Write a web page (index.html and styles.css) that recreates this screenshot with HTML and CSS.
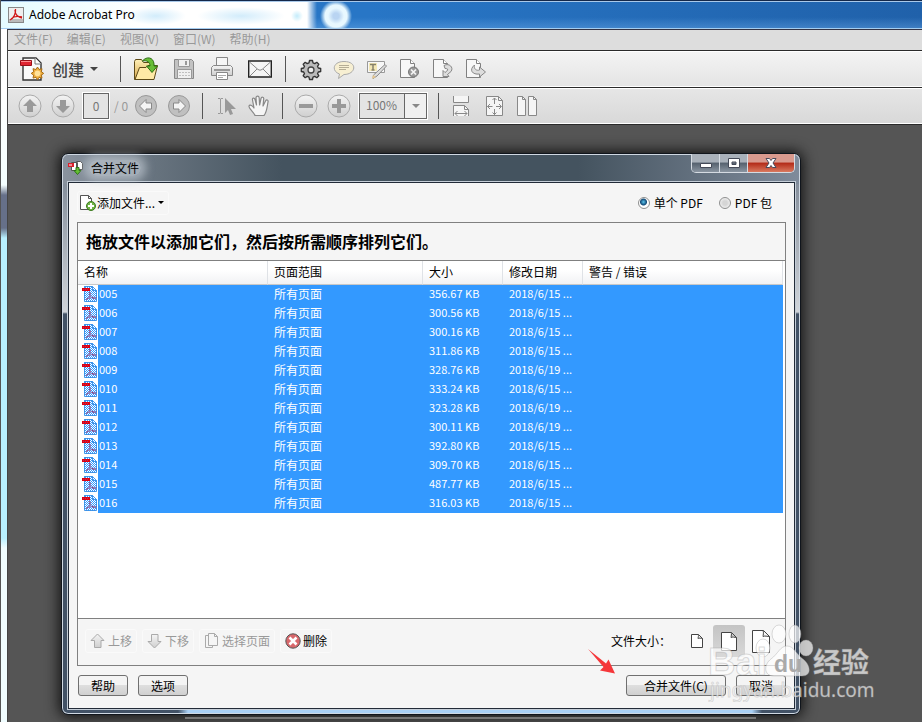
FILE: index.html
```html
<!DOCTYPE html>
<html lang="zh-CN">
<head>
<meta charset="UTF-8">
<meta name="viewport" content="width=device-width, initial-scale=1">
<title>Adobe Acrobat Pro</title>
<link rel="stylesheet" href="styles.css">
</head>
<body>
<svg class="defs" aria-hidden="true">
  <defs>
    <pattern id="checker" width="2" height="2" patternUnits="userSpaceOnUse">
      <path fill="#3399ff" d="M0 0h1v1h-1zM1 1h1v1h-1z"/>
    </pattern>
    <linearGradient id="silver" x1="0" y1="0" x2="0" y2="1">
      <stop offset="0" stop-color="#f4f4f4"/><stop offset="1" stop-color="#cfcfcf"/>
    </linearGradient>
    <linearGradient id="gold" x1="0" y1="0" x2="0" y2="1">
      <stop offset="0" stop-color="#fff0b8"/><stop offset="1" stop-color="#d9a94c"/>
    </linearGradient>
    <symbol id="pdf-file" viewBox="0 0 16 16">
      <path fill="#fff" stroke="#4c8fd0" d="M2.5.5h8l4 4v11h-12z"/>
      <path fill="none" stroke="#4c8fd0" d="M10.5.5v4h4"/>
      <path fill="none" stroke="#d8203c" d="M4 14c3-1 5-6 4-8s-1 3 1 5 4 2 5 1-4-1-9 1"/>
      <path fill="url(#checker)" d="M2 0h9l4 4v12H2z"/>
      <path fill="#e00010" d="M0 2h8v3H0z"/>
      <path fill="#b03060" d="M1 3h1v1h-1zM3 3h1v1h-1zM5 3h1v1h-1z"/>
    </symbol>
    <symbol id="page" viewBox="0 0 20 20">
      <path fill="#f7f7f7" stroke="#808080" d="M.5.5h10l4 4v14H.5z"/>
      <path fill="#fff" stroke="#808080" d="M10.5.5v4h4"/>
    </symbol>
  </defs>
</svg>

<header class="titlebar">
  <svg width="16" height="16" viewBox="0 0 16 16">
    <rect x=".5" y=".5" width="15" height="15" fill="#eee" stroke="#888"/>
    <path fill="#888" d="M1 12h14v3H1z" opacity=".5"/>
    <path fill="none" stroke="#d01818" stroke-width="1.3" d="M2 13c4-2 6-7 5.500-11M7 3c0 4 3 7 7 8M3 12c3-3 7-3 11-2"/>
  </svg>
  <h1>Adobe Acrobat Pro</h1>
</header>

<div class="window">
  <nav class="menubar">
    <button>文件(F)</button>
    <button>编辑(E)</button>
    <button>视图(V)</button>
    <button>窗口(W)</button>
    <button>帮助(H)</button>
  </nav>

  <div class="toolbar main-tools">
    <button class="create">
      <svg width="24" height="24" viewBox="0 0 24 24">
        <path fill="#fafafa" stroke="#333" stroke-width="1.4" d="M3 1h13l5 5v17H3z"/>
        <path fill="#fff" stroke="#777" d="M15 1v6h6"/>
        <path fill="#e02532" stroke="#9a1018" d="M.5 3.500h11v5H.5z"/>
        <path fill="#ff8c90" d="M1 4h10v1H1z"/>
        <path fill="#f0b040" stroke="#a86c14" d="M17.500 10l1.500 2.500 3-.8-.7 3 2.400 1.700-2.400 1.700.7 3-3-.8-1.500 2.500-1.500-2.500-3 .8.7-3-2.500-1.700 2.500-1.700-.7-3 3 .8z"/>
        <circle cx="17.500" cy="16.400" r="2.800" fill="#ffe29a"/>
      </svg>
      <span>创建</span>
      <i class="caret"></i>
    </button>
    <i class="sep"></i>
    <div class="group wide">
      <button aria-label="打开">
        <svg width="24" height="24" viewBox="0 0 24 24">
          <path fill="url(#gold)" stroke="#5e4a18" d="M.5 22.500v-18l1-2h6l2 3h9v17z"/>
          <path fill="#ffe9a6" stroke="#5e4a18" d="M1 22.500L5.500 10.500H12l2-2h9.500L20 22.500z"/>
          <path fill="#67bd35" stroke="#2c6e12" d="M8.500 4c4-5 11-4 11.500 3v2h3.500L18 15.500 12.500 9H16c0-4-3-6-7.500-5z"/>
        </svg>
      </button>
      <button aria-label="保存" disabled>
        <svg width="24" height="24" viewBox="0 0 24 24">
          <path fill="#c2c2c2" stroke="#888" d="M2.500 2.500h17l2 2v17h-19z"/>
          <path fill="#f0f0f0" stroke="#999" d="M6.500 2.500h11v7h-11zM5.500 12.500h14v9h-14z"/>
          <path fill="#999" d="M13 4h2v4h-2z"/>
          <path stroke="#c0c0c0" stroke-dasharray="2 1" d="M7 15.500h11M7 18.500h11"/>
        </svg>
      </button>
      <button aria-label="打印" disabled>
        <svg width="24" height="24" viewBox="0 0 24 24">
          <path fill="#f6f6f6" stroke="#888" d="M6.500.5h11v9h-11z"/>
          <path fill="url(#silver)" stroke="#888" d="M3.500 8.500h17l2 2v8h-21v-8z"/>
          <path fill="#999" d="M4 12h16v2H4z"/>
          <path fill="#fff" stroke="#888" d="M6.500 15.500h11v7h-11z"/>
          <path stroke="#aaa" d="M8 18.500h8M8 20.500h5"/>
        </svg>
      </button>
      <button aria-label="电子邮件">
        <svg width="24" height="24" viewBox="0 0 24 24">
          <path fill="#f5f5f5" stroke="#222" stroke-width="1.400" d="M.7 4h22.600v16H.7z"/>
          <path fill="none" stroke="#888" d="M1.500 5L10 12.500q2 1.500 4 0L22.500 5M2 19l7-7M22 19l-7-7"/>
        </svg>
      </button>
    </div>
    <i class="sep"></i>
    <div class="group">
      <button aria-label="设置">
        <svg width="24" height="24" viewBox="0 0 24 24">
          <path fill="#bbb" stroke="#333" stroke-width="1.300" stroke-linejoin="round" d="M10.500 3.500h3l.5 2.300 1.800.8 2-1.300 2 2-1.300 2 .8 1.700 2.400.5v3l-2.400.5-.8 1.700 1.300 2-2 2-2-1.300-1.800.8-.5 2.300h-3l-.5-2.300-1.800-.8-2 1.300-2-2 1.300-2-.8-1.700-2.400-.5v-3l2.400-.5.8-1.700-1.300-2 2-2 2 1.300 1.800-.8z"/>
          <circle cx="12" cy="13" r="3" fill="#eee" stroke="#444" stroke-width="1.300"/>
        </svg>
      </button>
      <button aria-label="注释" disabled>
        <svg width="24" height="24" viewBox="0 0 24 24">
          <path fill="#f7efd2" stroke="#aaa" d="M12 4.500c14 0 12 13 0 13L6.500 21.500l1-4.500C-1 14 1 4.500 12 4.500z"/>
          <path stroke="#b5ad95" d="M7 8.500h10M7 10.500h10M7 12.500h7"/>
        </svg>
      </button>
      <button aria-label="编辑文本" disabled>
        <svg width="24" height="24" viewBox="0 0 24 24">
          <path fill="#f7f7f7" stroke="#999" d="M2.500 4.500h17v11h-17z"/>
          <path fill="#f3e7b5" d="M4 6h8v8H4z"/>
          <path stroke="#86816c" stroke-width="1.500" d="M5 7.500h6M8 7v6M6.500 13h3"/>
          <path fill="#ddd" stroke="#888" d="M20 7.500l1.500 1.500L12 19l-4 2.500.5-3.500z"/>
          <path fill="#e8c890" d="M8 18l3 2-4 2z"/>
        </svg>
      </button>
      <button aria-label="删除页面" disabled>
        <svg width="24" height="24" viewBox="0 0 24 24">
          <use href="#page" x="2" y="2" width="20" height="20"/>
          <circle cx="15.500" cy="15" r="5" fill="#999" stroke="#777"/>
          <path stroke="#f5f5f5" stroke-width="1.700" d="M13 12.500l5 5M18 12.500l-5 5"/>
        </svg>
      </button>
      <button aria-label="旋转页面" disabled>
        <svg width="24" height="24" viewBox="0 0 24 24">
          <use href="#page" x="2" y="2" width="20" height="20"/>
          <path fill="#ddd" stroke="#888" d="M13 8.500c5-3 10 2 7 6l-3.500 3 1.500 2h-6v-6l2 2c3-2 4-4 0-4z"/>
        </svg>
      </button>
      <button aria-label="提取页面" disabled>
        <svg width="24" height="24" viewBox="0 0 24 24">
          <use href="#page" x="2" y="2" width="20" height="20"/>
          <path fill="#ddd" stroke="#888" d="M10.500 8c-6 5-2 10 5 9v3l6-5-6-5v3c-3 1-6-1-5-5z"/>
        </svg>
      </button>
    </div>
  </div>

  <div class="toolbar nav-tools">
    <div class="group">
      <button aria-label="上一页" disabled>
        <svg width="24" height="24" viewBox="0 0 24 24">
          <circle cx="12" cy="12" r="11" fill="url(#silver)" stroke="#aaa"/>
          <path fill="#999" d="M12 5l7 7h-4v6H9v-6H5z"/>
        </svg>
      </button>
      <button aria-label="下一页" disabled>
        <svg width="24" height="24" viewBox="0 0 24 24">
          <circle cx="12" cy="12" r="11" fill="url(#silver)" stroke="#aaa"/>
          <path fill="#999" d="M12 19l7-7h-4V6H9v6H5z"/>
        </svg>
      </button>
    </div>
    <input class="page-no" type="text" value="0" aria-label="页码">
    <span class="page-total">/ 0</span>
    <div class="group">
      <button aria-label="后退" disabled>
        <svg width="24" height="24" viewBox="0 0 24 24">
          <circle cx="12" cy="12" r="10.500" fill="#c0c0c0" stroke="#999"/>
          <path fill="#f4f4f4" stroke="#888" d="M5.500 12L12 5.500v3.500h5.500v6H12v3.500z"/>
        </svg>
      </button>
      <button aria-label="前进" disabled>
        <svg width="24" height="24" viewBox="0 0 24 24">
          <circle cx="12" cy="12" r="10.500" fill="#c0c0c0" stroke="#999"/>
          <path fill="#f4f4f4" stroke="#888" d="M18.500 12L12 5.500v3.500H6.500v6H12v3.500z"/>
        </svg>
      </button>
    </div>
    <i class="sep"></i>
    <div class="group">
      <button aria-label="选择工具" disabled>
        <svg width="24" height="24" viewBox="0 0 24 24">
          <path fill="none" stroke="#999" d="M4 4.500h2l.5.500.5-.5h2M6.500 5v14M4 19.500h2l.5-.5.5.5h2"/>
          <path fill="#999" d="M11 4v15l3-3 2 5 3-1-2-5h5z"/>
        </svg>
      </button>
      <button aria-label="手形工具" disabled>
        <svg width="24" height="24" viewBox="0 0 24 24">
          <path fill="#f5f5f5" stroke="#888" stroke-width="1.200" stroke-linejoin="round" d="M8 21.500C7 18 1 14 2 12s4 0 5 2L5.500 6C5 3.500 7.500 3.500 8 5.500L9.500 11 9 4c0-2.500 3-2.500 3.200 0l.4 7L14 4.500c.5-2 3-1.500 2.700.5L16 12l2.500-5c1-2 3-1 2.500 1-1 5-1 10-4 13.500z"/>
        </svg>
      </button>
    </div>
    <i class="sep"></i>
    <div class="group">
      <button aria-label="缩小" disabled>
        <svg width="24" height="24" viewBox="0 0 24 24">
          <circle cx="12" cy="12" r="11" fill="url(#silver)" stroke="#aaa"/>
          <path fill="#999" d="M5 10h14v4H5z"/>
        </svg>
      </button>
      <button aria-label="放大" disabled>
        <svg width="24" height="24" viewBox="0 0 24 24">
          <circle cx="12" cy="12" r="11" fill="url(#silver)" stroke="#aaa"/>
          <path fill="#999" d="M10 5h4v5h5v4h-5v5h-4v-5H5v-4h5z"/>
        </svg>
      </button>
    </div>
    <div class="zoom">
      <select aria-label="缩放"><option>100%</option></select>
      <i class="caret"></i>
    </div>
    <i class="sep"></i>
    <div class="group">
      <button aria-label="适合宽度" disabled>
        <svg width="24" height="24" viewBox="0 0 24 24" fill="#f5f5f5" stroke="#888">
          <path d="M3.500 2v6.500h15V2M3.500 22V11.500h11l4 4V22"/>
          <path fill="none" d="M14.500 11.500v4h4M5 19.500h12M7.500 17l-2.500 2.500L7.500 22M14.500 17l2.500 2.500-2.500 2.500"/>
        </svg>
      </button>
      <button aria-label="适合页面" disabled>
        <svg width="24" height="24" viewBox="0 0 24 24" fill="#f5f5f5" stroke="#888">
          <path d="M3.500 2.500h12l4 4v15h-16z"/>
          <path fill="none" d="M15.500 2.500v4h4M4.500 12.500h5M13 12.500h5M11.500 4v6M11.500 15v6M7 10l-2.500 2.500L7 15M16 10l2.500 2.500L16 15M9.500 6l2-2 2 2M9.500 18.500l2 2 2-2"/>
        </svg>
      </button>
      <button aria-label="双页" disabled>
        <svg width="24" height="24" viewBox="0 0 24 24" fill="#f5f5f5" stroke="#888">
          <path d="M1.500 2.500h5l3 3v16h-8zM12.500 2.500h5l3 3v16h-8z"/>
          <path fill="none" d="M6.500 2.500v3h3M17.500 2.500v3h3"/>
        </svg>
      </button>
    </div>
  </div>

  <main class="workspace">
    <section class="dialog" aria-label="合并文件">
      <div class="dialog-title">
        <svg width="16" height="16" viewBox="0 0 16 16">
          <path fill="#fff" stroke="#555" d="M3.500 2.500h6v8h-6zM8.500 1.500h4l2 2v6h-6z"/>
          <path fill="#d9202c" d="M0 3h6v4H0z"/>
          <path fill="#fff" d="M1 4.500h3v1H1z"/>
          <path fill="#62c030" stroke="#2c7015" d="M8 7.500h3v3h2l-3.500 4-3.500-4H8z"/>
        </svg>
        <h2>合并文件</h2>
        <div class="win-buttons">
          <button aria-label="最小化"><svg width="14" height="12" viewBox="0 0 14 12"><path fill="#fff" stroke="#444a58" d="M1.500 6.500h11v4h-11z"/></svg></button>
          <button aria-label="最大化"><svg width="14" height="12" viewBox="0 0 14 12"><path fill="#fff" stroke="#444a58" fill-rule="evenodd" d="M1.500 1.500h11v9h-11zM5 5v2.500h4V5z"/></svg></button>
          <button class="close" aria-label="关闭"><svg width="14" height="12" viewBox="0 0 14 12"><path fill="#fff" stroke="#4a4a5a" d="M2 1.500h3.500L7 3.500l1.500-2H12L9 6l3 4.500H8.500L7 8.500l-1.500 2H2L5 6z"/></svg></button>
        </div>
      </div>

      <div class="dialog-body">
        <div class="add-row">
          <button class="flat add">
            <svg width="16" height="16" viewBox="0 0 16 16">
              <path fill="#fff" stroke="#555" d="M.5.500h8l3 3v11H.5z"/>
              <path fill="none" stroke="#555" d="M8.500.5v3h3"/>
              <circle cx="11" cy="11" r="4.500" fill="#6fb444" stroke="#3c7a20"/>
              <path stroke="#fff" stroke-width="2" d="M8 11h6M11 8v6"/>
            </svg>
            添加文件...
            <i class="caret"></i>
          </button>
          <div class="modes">
            <label><input type="radio" name="mode" checked> 单个 PDF</label>
            <label><input type="radio" name="mode"> PDF 包</label>
          </div>
        </div>

        <div class="panel">
          <h3>拖放文件以添加它们，然后按所需顺序排列它们。</h3>
          <div class="files">
            <table>
              <colgroup><col class="c-name"><col class="c-range"><col class="c-size"><col class="c-date"><col></colgroup>
              <thead>
                <tr><th>名称</th><th>页面范围</th><th>大小</th><th>修改日期</th><th>警告 / 错误</th></tr>
              </thead>
              <tbody>
                <tr><td><svg><use href="#pdf-file"/></svg>005</td><td>所有页面</td><td>356.67 KB</td><td>2018/6/15 ...</td><td></td></tr>
                <tr><td><svg><use href="#pdf-file"/></svg>006</td><td>所有页面</td><td>300.56 KB</td><td>2018/6/15 ...</td><td></td></tr>
                <tr><td><svg><use href="#pdf-file"/></svg>007</td><td>所有页面</td><td>300.16 KB</td><td>2018/6/15 ...</td><td></td></tr>
                <tr><td><svg><use href="#pdf-file"/></svg>008</td><td>所有页面</td><td>311.86 KB</td><td>2018/6/15 ...</td><td></td></tr>
                <tr><td><svg><use href="#pdf-file"/></svg>009</td><td>所有页面</td><td>328.76 KB</td><td>2018/6/19 ...</td><td></td></tr>
                <tr><td><svg><use href="#pdf-file"/></svg>010</td><td>所有页面</td><td>333.24 KB</td><td>2018/6/15 ...</td><td></td></tr>
                <tr><td><svg><use href="#pdf-file"/></svg>011</td><td>所有页面</td><td>323.28 KB</td><td>2018/6/19 ...</td><td></td></tr>
                <tr><td><svg><use href="#pdf-file"/></svg>012</td><td>所有页面</td><td>300.11 KB</td><td>2018/6/19 ...</td><td></td></tr>
                <tr><td><svg><use href="#pdf-file"/></svg>013</td><td>所有页面</td><td>392.80 KB</td><td>2018/6/15 ...</td><td></td></tr>
                <tr><td><svg><use href="#pdf-file"/></svg>014</td><td>所有页面</td><td>309.70 KB</td><td>2018/6/15 ...</td><td></td></tr>
                <tr><td><svg><use href="#pdf-file"/></svg>015</td><td>所有页面</td><td>487.77 KB</td><td>2018/6/15 ...</td><td></td></tr>
                <tr><td><svg><use href="#pdf-file"/></svg>016</td><td>所有页面</td><td>316.03 KB</td><td>2018/6/15 ...</td><td></td></tr>
              </tbody>
            </table>
          </div>
          <div class="panel-foot">
            <button class="flat" disabled>
              <svg width="16" height="16" viewBox="0 0 16 16"><path fill="url(#silver)" stroke="#aaa" d="M7.500 1l6.500 6.500h-3v7H4.500v-7H1z"/></svg>
              上移
            </button>
            <button class="flat" disabled>
              <svg width="16" height="16" viewBox="0 0 16 16"><path fill="url(#silver)" stroke="#aaa" d="M7.500 15L14 8.500h-3v-7H4.500v7H1z"/></svg>
              下移
            </button>
            <button class="flat" disabled>
              <svg width="16" height="16" viewBox="0 0 16 16" fill="#f5f5f5" stroke="#aaa"><path d="M1.500 2.500h7v12h-7z"/><path d="M4.500.5h6l3 3v9h-9zM10.500.5v3h3"/></svg>
              选择页面
            </button>
            <button class="flat">
              <svg width="16" height="16" viewBox="0 0 16 16"><circle cx="8" cy="8" r="7.200" fill="#d8686c" stroke="#555"/><path stroke="#fff" stroke-width="2.600" d="M4.500 4.500l7 7M11.500 4.500l-7 7"/></svg>
              删除
            </button>
            <div class="sizes">
              <span>文件大小：</span>
              <button aria-label="较小"><svg width="12" height="14" viewBox="0 0 12 14"><path d="M.5.500h7l4 4v9H.5zM7 .5c1 1 0 3 0 4 1-1 3 0 4.500 0"/></svg></button>
              <button class="on" aria-label="默认"><svg width="16" height="19" viewBox="0 0 16 19"><path d="M.5.500h10l5 5v13H.5zM10 .5c1 1 0 4 0 5 1-1 4 0 5.500 0"/></svg></button>
              <button aria-label="较大"><svg width="18" height="23" viewBox="0 0 18 23"><path d="M.5.500h11l6 6v16H.5zM11 .5c1 2 0 5 0 6 1-1 5 0 6.500 0"/></svg></button>
            </div>
          </div>
        </div>

        <div class="actions">
          <button>帮助</button>
          <button>选项</button>
          <button class="primary">合并文件(C)</button>
          <button>取消</button>
        </div>
      </div>
    </section>
    <div class="strip"></div>

    <svg class="pointer" width="30" height="28" viewBox="0 0 30 28">
      <path fill="#f5373a" d="M1 1L19 15.500l2.500-4L28 25.500l-15-3 3.500-3.500z"/>
    </svg>

    <div class="watermark">
      <svg width="168" height="80" viewBox="0 0 168 80">
        <g class="ink">
          <ellipse cx="55" cy="26" rx="7" ry="9"/>
          <ellipse cx="71" cy="12" rx="7" ry="9"/>
          <ellipse cx="87" cy="12" rx="6" ry="9"/>
          <ellipse cx="98" cy="26" rx="7" ry="8"/>
          <path d="M79 24c7 0 9 8 16 13s10 17-1 17H66c-11 0-10-12-3-17s9-13 16-13z"/>
        </g>
        <text class="ink bai" x="0" y="53">Bai</text>
        <text class="du" x="66" y="50">du</text>
        <text class="ink jy" x="105" y="51">经验</text>
        <text class="ink url" x="2" y="75">jingyan.baidu.com</text>
      </svg>
    </div>
  </main>
</div>
</body>
</html>
```
FILE: styles.css
```css
* {
  box-sizing: border-box;
}
body {
  margin: 0;
  min-height: 100vh;
  display: flex;
  flex-direction: column;
  font-family: "Noto Sans CJK SC", sans-serif;
  font-size: 12px;
  line-height: 16px;
  color: #000;
  border-left: 1px solid #555;
  background: linear-gradient(#fff 90px, #f4ffff 185px, #667089 195px, #667089 228px, #b8f0ff 238px, #b8f0ff 538px, #f0fdff 548px);
}
h1, h2, h3 {
  margin: 0;
  font-size: 12px;
  font-weight: normal;
}
button, input, select {
  font: inherit;
  color: inherit;
  margin: 0;
}
button {
  display: flex;
  align-items: center;
  justify-content: center;
  padding: 0;
  border: 0;
  background: none;
}
svg {
  display: block;
  flex: none;
}
.defs {
  position: absolute;
  width: 0;
  height: 0;
}
.caret {
  border: 4px solid transparent;
  border-top-color: #444;
  border-bottom: 0;
}

/* main window */
.titlebar {
  display: flex;
  align-items: center;
  gap: 5px;
  height: 29px;
  padding-left: 7px;
  border-top: 1px solid #14284a;
  border-bottom: 1px solid #a4cdf0;
  box-shadow: inset 0 1px #a9c9ea;
  background:
    radial-gradient(circle at 335px 15px, #b9d4f2 3px, #e8f8ff 8px, #e8f8ff 11px, transparent 16px),
    radial-gradient(circle at 296px 15px, #c4ecfb, transparent 6px),
    radial-gradient(44px 9px at 240px 15px, #d2ecfb, transparent),
    radial-gradient(30px 9px at 155px 15px, #d2ecfb, transparent),
    linear-gradient(90deg, #e4fbff, #fff 140px, #fff 306px, transparent 316px),
    linear-gradient(transparent 60%, rgba(120, 180, 240, .35)),
    linear-gradient(90deg, #2876c6 40%, #2061aa);
}
.titlebar h1 {
  font-family: "Noto Sans", sans-serif;
}
.window {
  flex: 1;
  display: flex;
  flex-direction: column;
  margin-left: 6px;
  border-left: 1px solid #444;
  border-top: 1px solid #334;
}
.menubar {
  display: flex;
  gap: 14px;
  height: 21px;
  padding: 0 6px 2px;
  background: #ddd;
  border-bottom: 1px solid #2a2a2a;
  color: #999;
}
.toolbar {
  display: flex;
  align-items: center;
  height: 37px;
  border-bottom: 1px solid #2a2a2a;
  box-shadow: inset 0 1px #fff, inset 0 -1px #fff;
}
.main-tools {
  padding-left: 12px;
  background: linear-gradient(#f4f4f4, #e4e4e4);
}
.nav-tools {
  padding-left: 10px;
  background: linear-gradient(#e6e6e6, #d8d8d8);
}
.create {
  width: 87px;
  justify-content: flex-start;
  font-size: 16px;
  font-weight: 500;
  color: #444;
}
.create span {
  margin: 0 6px 0 8px;
}
.sep {
  width: 1px;
  height: 26px;
  margin: 0 13px;
  background: #555;
}
.nav-tools .sep {
  margin: 0 11px;
}
.group {
  display: flex;
  gap: 9px;
}
.group.wide {
  gap: 14px;
}
.page-no {
  width: 26px;
  height: 26px;
  margin-left: 8px;
  padding: 0 0 2px;
  text-align: center;
  color: #777;
  border: 1px solid #666;
  box-shadow: 0 0 0 1px #fff;
  background: #e4e4e4;
}
.page-total {
  width: 25px;
  padding-left: 5px;
  color: #999;
}
.zoom {
  position: relative;
  margin-left: 8px;
}
.zoom select {
  display: block;
  width: 68px;
  height: 26px;
  padding: 0 6px 2px;
  appearance: none;
  color: #777;
  border: 1px solid #666;
  border-radius: 0;
  box-shadow: 0 0 0 1px #fff;
  background: linear-gradient(90deg, #e4e4e4 44px, #666 44px, #666 45px, #f0f0f0 45px);
}
.zoom .caret {
  position: absolute;
  right: 7px;
  top: 11px;
  border-top-color: #888;
}

/* document area */
.workspace {
  position: relative;
  flex: 1;
  display: flex;
  flex-direction: column;
  padding: 28px 121px 0 53px;
  background: #555;
}
.strip {
  height: 2px;
  margin: 2px 45px 3px 124px;
  background: #777;
}
.dialog {
  flex: 1;
  display: flex;
  flex-direction: column;
  padding: 0 5px 5px 6px;
  border: 1px solid #10151c;
  border-radius: 7px;
  background:
    linear-gradient(90deg, #425266 116px, #a9d0f5 126px, #a9d0f5 calc(100% - 48px), #425266 calc(100% - 38px)) bottom / 100% 6px no-repeat,
    linear-gradient(90deg, #8a939f, #68747f 90px, #44535f 220px, #44535f 70%, #7f8b9b) top / 100% 30px no-repeat,
    linear-gradient(#858f9c 30px, #d0d4d9 158px, #425266 160px);
  box-shadow: inset 0 0 0 1px #cfd8e2, 0 0 14px 2px #111;
}
.dialog-title {
  position: relative;
  display: flex;
  align-items: center;
  gap: 5px;
  height: 28px;
}
.dialog-title h2 {
  padding: 0 2px;
  border-radius: 8px;
  background: rgba(200, 208, 216, .6);
  box-shadow: 0 0 8px 5px rgba(200, 208, 216, .6);
}
.win-buttons {
  display: flex;
  align-self: flex-start;
  margin-left: auto;
  border: 1px solid #d5dbe2;
  border-top: 0;
  border-radius: 0 0 5px 5px;
  overflow: hidden;
}
.win-buttons button {
  width: 28px;
  height: 18px;
  border-right: 1px solid #d5dbe2;
  background: linear-gradient(#a9b1ba 45%, #55616e 50%, #8a95a1);
}
.win-buttons .close {
  width: 46px;
  border: 0;
  background: linear-gradient(#d99a8e 45%, #b32a17 50%, #d97a60);
}
.dialog-body {
  flex: 1;
  display: flex;
  flex-direction: column;
  padding: 0 8px 12px;
  border: 1px solid #222b38;
  outline: 1px solid #c5ced8;
  background: #f5f5f5;
}
.add-row {
  display: flex;
  align-items: center;
  height: 39px;
}
.flat {
  gap: 2px;
  height: 24px;
  padding: 0 4px;
  border: 1px solid #fafafa;
  border-radius: 3px;
}
.flat.add {
  gap: 1px;
  padding-left: 2px;
}
.flat:disabled {
  color: #999;
}
.add-row .caret {
  margin-left: 2px;
  border-width: 3px;
  border-bottom: 0;
  border-top-color: #000;
}
.modes {
  display: flex;
  gap: 16px;
  margin-left: auto;
  padding-right: 14px;
}
.modes label {
  display: flex;
  align-items: center;
  gap: 4px;
}
.modes input {
  appearance: none;
  width: 12px;
  height: 12px;
  border: 1px solid #8e8f8f;
  border-radius: 50%;
  background: radial-gradient(#d5d5d5 30%, #fff);
}
.modes input:checked {
  background: radial-gradient(circle at 45% 40%, #5cc8f0, #124a78 3px, #fff 4px);
}
.panel {
  flex: 1;
  display: flex;
  flex-direction: column;
  border: 1px solid #808080;
}
.panel h3 {
  height: 38px;
  padding-left: 8px;
  font-size: 16px;
  font-weight: bold;
  line-height: 36px;
  border-bottom: 1px solid #808080;
}
.files {
  flex: 1;
  padding-right: 2px;
  background: #fff;
  border-bottom: 1px solid #808080;
}
table {
  width: 100%;
  table-layout: fixed;
  border-collapse: separate;
  border-spacing: 0;
}
.c-name {
  width: 190px;
}
.c-range {
  width: 155px;
}
.c-size, .c-date {
  width: 80px;
}
th {
  height: 24px;
  padding: 0 0 2px 6px;
  font-weight: normal;
  text-align: left;
  border-right: 1px solid #dfe2e6;
  border-bottom: 1px solid #c8c8c8;
  background: linear-gradient(#fff 40%, #f1f2f4);
}
td {
  height: 19px;
  padding: 0 0 2px 6px;
  font-size: 11px;
  line-height: 17px;
  color: #fff;
  background: #3399ff;
}
td:first-child {
  padding-left: 4px;
  background: linear-gradient(90deg, #fff 20px, #3399ff 20px);
}
td:nth-child(2) {
  font-size: 12px;
}
td svg {
  float: left;
  width: 16px;
  height: 16px;
  margin: 1px 1px 0 0;
}
.panel-foot {
  display: flex;
  align-items: center;
  gap: 5px;
  height: 46px;
  padding: 0 8px 2px 7px;
}
.sizes {
  display: flex;
  align-items: center;
  margin-left: auto;
}
.sizes span {
  margin-right: 10px;
}
.sizes button {
  width: 32px;
  height: 32px;
}
.sizes svg {
  fill: #fff;
  stroke: #444;
}
.sizes .on {
  border-radius: 3px;
  background: linear-gradient(#c4c4c4, #d8d8d8);
}
.actions {
  display: flex;
  gap: 10px;
  padding: 9px 0 0 1px;
}
.actions button {
  width: 50px;
  height: 21px;
  border: 1px solid #707070;
  border-radius: 3px;
  background: linear-gradient(#f4f4f4 45%, #dedede 50%, #d0d0d0);
}
.actions .primary {
  width: 100px;
  margin-left: auto;
}

/* overlays */
.pointer {
  position: absolute;
  right: 305px;
  bottom: 46px;
}
.watermark {
  position: absolute;
  right: 46px;
  bottom: 20px;
}
.ink {
  fill: #fff;
  fill-opacity: .7;
  stroke: #999;
  stroke-opacity: .35;
}
.bai {
  font: bold 38px "Liberation Sans", sans-serif;
}
.du {
  font: bold 23px "Liberation Sans", sans-serif;
  fill: #aaa;
}
.jy {
  font: bold 28px "Noto Sans CJK SC", sans-serif;
}
.url {
  font: 19px "Noto Sans", sans-serif;
}
```
